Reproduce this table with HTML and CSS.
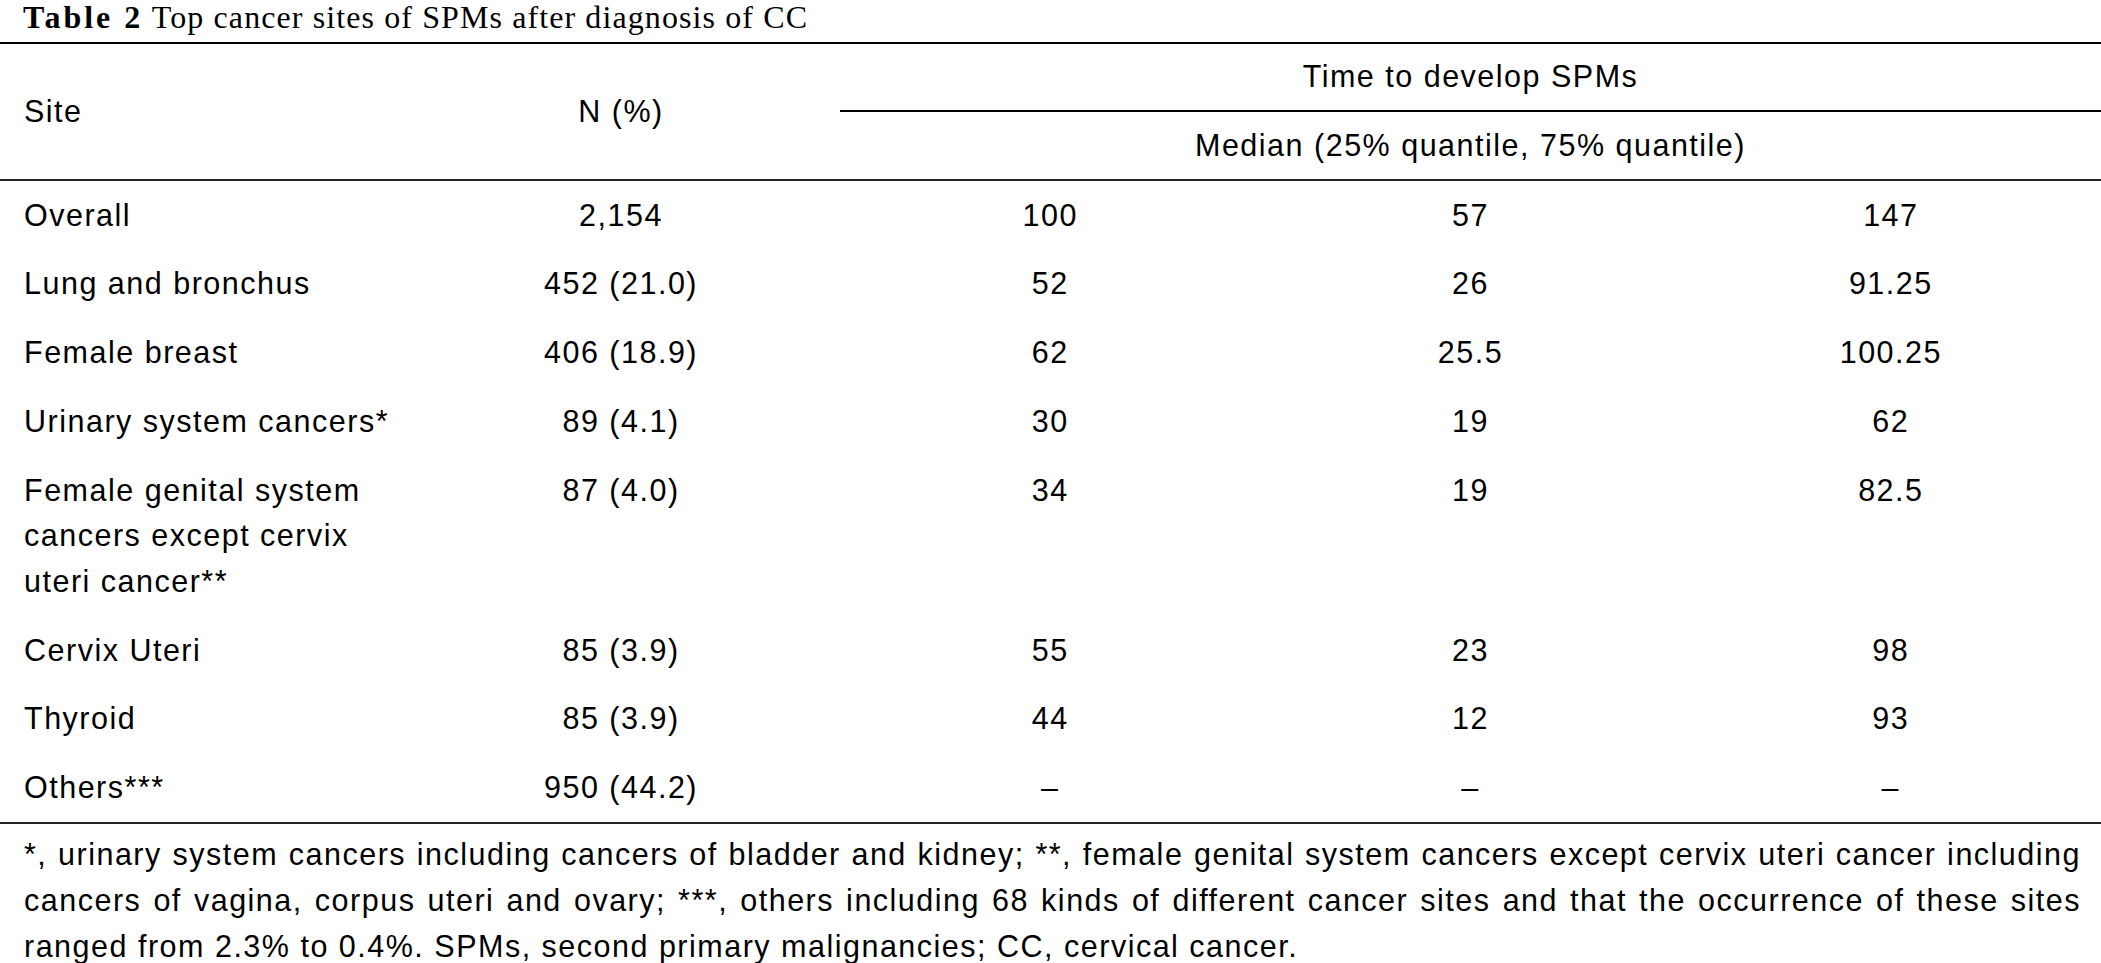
FILE: index.html
```html
<!DOCTYPE html>
<html lang="en">
<head>
<meta charset="utf-8">
<title>Table 2</title>
<link rel="stylesheet" href="styles.css">
</head>
<body>
<div class="title"><b>Table 2</b> Top cancer sites of SPMs after diagnosis of CC</div>
<table class="data">
  <colgroup>
    <col class="c-site">
    <col class="c-n">
    <col class="c-t">
    <col class="c-t">
    <col class="c-t">
  </colgroup>
  <thead>
    <tr>
      <th rowspan="2" class="left mid rule">Site</th>
      <th rowspan="2" class="mid rule">N (%)</th>
      <th colspan="3" class="group">Time to develop SPMs</th>
    </tr>
    <tr>
      <th colspan="3" class="sub rule">Median (25% quantile, 75% quantile)</th>
    </tr>
  </thead>
  <tbody>
    <tr><td class="left">Overall</td><td>2,154</td><td>100</td><td>57</td><td>147</td></tr>
    <tr><td class="left">Lung and bronchus</td><td>452 (21.0)</td><td>52</td><td>26</td><td>91.25</td></tr>
    <tr><td class="left">Female breast</td><td>406 (18.9)</td><td>62</td><td>25.5</td><td>100.25</td></tr>
    <tr><td class="left">Urinary system cancers*</td><td>89 (4.1)</td><td>30</td><td>19</td><td>62</td></tr>
    <tr><td class="left">Female genital system cancers except cervix uteri cancer**</td><td>87 (4.0)</td><td>34</td><td>19</td><td>82.5</td></tr>
    <tr><td class="left">Cervix Uteri</td><td>85 (3.9)</td><td>55</td><td>23</td><td>98</td></tr>
    <tr><td class="left">Thyroid</td><td>85 (3.9)</td><td>44</td><td>12</td><td>93</td></tr>
    <tr class="last"><td class="left">Others***</td><td>950 (44.2)</td><td>–</td><td>–</td><td>–</td></tr>
  </tbody>
</table>
<p class="note">*, urinary system cancers including cancers of bladder and kidney; **, female genital system cancers except cervix uteri cancer including cancers of vagina, corpus uteri and ovary; ***, others including 68 kinds of different cancer sites and that the occurrence of these sites ranged from 2.3% to 0.4%. SPMs, second primary malignancies; CC, cervical cancer.</p>
</body>
</html>
```

FILE: styles.css
```css
html, body {
  margin: 0;
  padding: 0;
  background: #fff;
  color: #000;
}

body {
  font-family: "Liberation Sans", Arial, sans-serif;
  font-size: 30.5px;
  letter-spacing: 1.5px;
}

.title {
  font-family: "Liberation Serif", "Times New Roman", serif;
  font-size: 32px;
  letter-spacing: 1.1px;
  line-height: 34px;
  height: 34px;
  padding: 0 0 8px 23px;
  white-space: nowrap;
}

.title b {
  font-weight: 700;
  letter-spacing: 3px;
}

.data {
  width: 100%;
  table-layout: fixed;
  border-collapse: separate;
  border-spacing: 0;
  border-top: 2px solid #000;
}

.c-site { width: 402px; }
.c-n { width: 438px; }

.data th,
.data td {
  font-weight: 400;
  text-align: center;
  padding: 0 24px;
  line-height: 45.6px;
}

.data .left {
  text-align: left;
  padding-right: 0;
}

.data th.mid {
  vertical-align: middle;
}

.data th.group {
  height: 66px;
  padding: 0;
  border-bottom: 2px solid #000;
  vertical-align: middle;
}

.data th.sub {
  height: 67px;
  padding: 0;
  vertical-align: middle;
}

.data th.rule {
  border-bottom: 2px solid #222;
}

.data td {
  padding-top: 11.6px;
  padding-bottom: 11.6px;
  vertical-align: top;
}

.data tr.last td {
  border-bottom: 2px solid #222;
}

.note {
  margin: 0;
  padding: 8px 20px 0 24px;
  line-height: 45.6px;
  text-align: justify;
}
```
